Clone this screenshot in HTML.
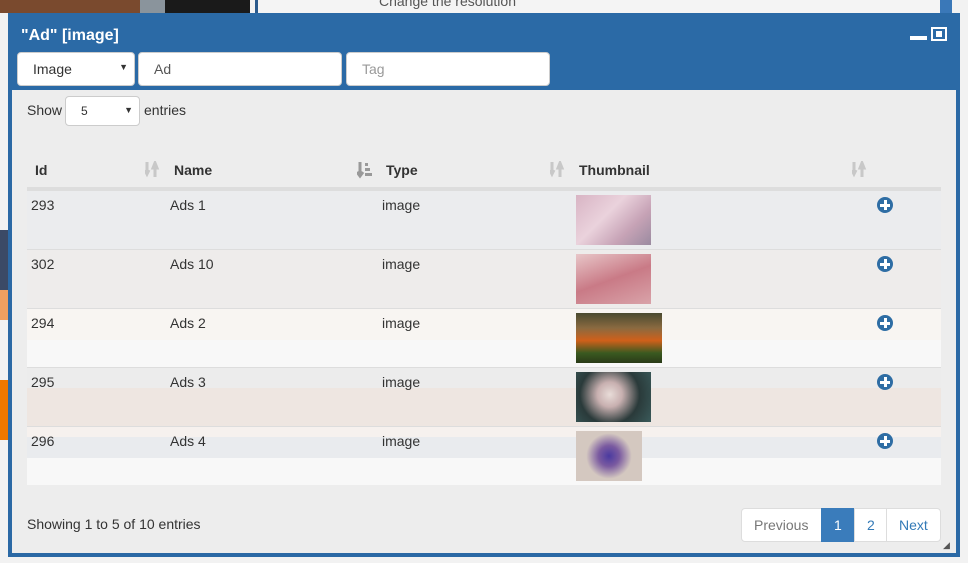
<!DOCTYPE html>
<html><head><meta charset="utf-8"><style>
*{box-sizing:border-box;margin:0;padding:0}
body{width:968px;height:563px;overflow:hidden;background:#f2f2f2;font-family:"Liberation Sans",sans-serif;position:relative;font-size:14px;color:#333}
.abs{position:absolute}
.dlg{left:8px;top:13px;width:952px;height:544px;border:4px solid #2b69a5;border-top:none;background:#ededed}
.hdr{left:8px;top:13px;width:952px;height:77px;background:#2b6aa6}
.inp{position:absolute;top:52px;height:34px;background:#fff;border:1px solid #ccc;border-radius:4px;font-size:14px;padding:8px 15px;color:#555}
.row{position:absolute;left:27px;width:914px;height:59px;border-top:1px solid #ddd}
.row span{position:absolute;top:6px;font-size:14px;color:#333}
.plus{position:absolute;left:850px;top:6px;width:16px;height:16px;border-radius:50%;background:#2e6da4}
.plus:before{content:"";position:absolute;left:3px;top:6.5px;width:10px;height:3px;background:#fff}
.plus:after{content:"";position:absolute;left:6.5px;top:3px;width:3px;height:10px;background:#fff}
.th{position:absolute;top:162px;font-weight:bold;font-size:14px;color:#333}
.sort{position:absolute;top:161px}
.pg{position:absolute;top:508px;height:34px;border:1px solid #ddd;background:#fff;font-size:14px;padding:8px 12px;color:#337ab7}
</style></head><body>
<div class="abs" style="left:0;top:0;width:140px;height:13px;background:#7a4a2e"></div>
<div class="abs" style="left:140px;top:0;width:25px;height:13px;background:#8a949c"></div>
<div class="abs" style="left:165px;top:0;width:85px;height:13px;background:#1a1a1a"></div>
<div class="abs" style="left:255px;top:0;width:685px;height:13px;background:#f4f4f4;border-left:3px solid #2b5a8c"></div>
<div class="abs" style="left:379px;top:-7px;font-size:14px;color:#555">Change the resolution</div>
<div class="abs" style="left:940px;top:0;width:12px;height:13px;background:#3a78b8"></div>
<div class="abs" style="left:0;top:230px;width:8px;height:60px;background:#3b4a66"></div>
<div class="abs" style="left:0;top:290px;width:8px;height:30px;background:#f0a060"></div>
<div class="abs" style="left:0;top:380px;width:8px;height:60px;background:#f07800"></div>

<div class="abs dlg"></div>
<div class="abs hdr"></div>
<div class="abs" style="left:21px;top:27px;color:#fff;font-weight:bold;font-size:16px">"Ad" [image]</div>
<div class="abs" style="left:910px;top:36px;width:17px;height:4px;background:#fff"></div>
<div class="abs" style="left:931px;top:27px;width:16px;height:14px;border:2px solid #fff;background:#2b6aa6"><div style="position:absolute;left:3px;top:2px;width:6px;height:6px;background:#fff"></div></div>

<div class="inp" style="left:17px;width:118px;color:#333">Image<span style="position:absolute;right:6px;top:9px;font-size:9px">▼</span></div>
<div class="inp" style="left:138px;width:204px;color:#555">Ad</div>
<div class="inp" style="left:346px;width:204px;color:#999">Tag</div>

<div class="abs" style="left:27px;top:102px;font-size:14px">Show</div>
<div class="abs" style="left:65px;top:96px;width:75px;height:30px;background:#fff;border:1px solid #ccc;border-radius:4px;font-size:12px;padding:7px 15px">5<span style="position:absolute;right:6px;top:8px;font-size:9px">▼</span></div>
<div class="abs" style="left:144px;top:102px;font-size:14px">entries</div>

<svg width="0" height="0" style="position:absolute"><defs>
<g id="ud"><path d="M2 1v11M0 9l2 4 2-4" stroke="currentColor" stroke-width="3" fill="none"/><path d="M10 16V5M8 7l2-5 2 5z" stroke="currentColor" stroke-width="3" fill="currentColor"/></g>
</defs></svg>
<div class="th" style="left:35px">Id</div><svg class="sort" style="left:145px;color:#c8c8c8" width="16" height="18"><use href="#ud"/></svg>
<div class="th" style="left:174px">Name</div><svg class="sort" style="left:357px;color:#999" width="16" height="18"><path d="M3 1v13M0 11l3 4 3-4" stroke="#999" stroke-width="3" fill="none"/><rect x="8" y="2" width="3" height="3" fill="#999"/><rect x="8" y="7" width="5" height="3" fill="#999"/><rect x="8" y="12" width="7" height="3" fill="#999"/></svg>
<div class="th" style="left:386px">Type</div><svg class="sort" style="left:550px;color:#c8c8c8" width="16" height="18"><use href="#ud"/></svg>
<div class="th" style="left:579px">Thumbnail</div><svg class="sort" style="left:852px;color:#c8c8c8" width="16" height="18"><use href="#ud"/></svg>
<div class="abs" style="left:27px;top:187px;width:914px;height:3px;background:#ddd"></div>

<div class="row" style="top:190px;background:#ebecee"><span style="left:4px">293</span><span style="left:143px">Ads 1</span><span style="left:355px">image</span>
<div class="abs" style="left:549px;top:4px;width:75px;height:50px;background:linear-gradient(135deg,#d8b4c4,#ead2dc 40%,#c7a3b6 70%,#9a8aa0)"></div><div class="plus"></div></div>
<div class="row" style="top:249px;background:#eeeceb"><span style="left:4px">302</span><span style="left:143px">Ads 10</span><span style="left:355px">image</span>
<div class="abs" style="left:549px;top:4px;width:75px;height:50px;background:linear-gradient(160deg,#e8c6c8,#c97a86 50%,#d9a3a9)"></div><div class="plus"></div></div>
<div class="row" style="top:308px;background:linear-gradient(#f8f5f2 0,#f8f5f2 31px,#f8f8f8 31px)"><span style="left:4px">294</span><span style="left:143px">Ads 2</span><span style="left:355px">image</span>
<div class="abs" style="left:549px;top:4px;width:86px;height:50px;background:linear-gradient(#4a4a30,#8a6a40 30%,#d0601a 55%,#3a5a20 80%,#2a3a18)"></div><div class="plus"></div></div>
<div class="row" style="top:367px;background:linear-gradient(#ececec 0,#ececec 20px,#eee6e1 20px)"><span style="left:4px">295</span><span style="left:143px">Ads 3</span><span style="left:355px">image</span>
<div class="abs" style="left:549px;top:4px;width:75px;height:50px;background:radial-gradient(circle at 45% 45%,#e8dcd8 0,#c8b0b0 25%,#2a3a3a 60%,#3a5a5a)"></div><div class="plus"></div></div>
<div class="row" style="top:426px;background:linear-gradient(#f6f1ee 0,#f6f1ee 10px,#e9ebee 10px,#e9ebee 31px,#f8f8f8 31px)"><span style="left:4px">296</span><span style="left:143px">Ads 4</span><span style="left:355px">image</span>
<div class="abs" style="left:549px;top:4px;width:66px;height:50px;background:radial-gradient(circle at 50% 50%,#4a3aa0 0,#7a5aa0 25%,#d4c8c0 55%)"></div><div class="plus"></div></div>

<div class="abs" style="left:27px;top:516px;font-size:14px">Showing 1 to 5 of 10 entries</div>
<div class="pg" style="left:741px;width:81px;color:#777;border-radius:4px 0 0 4px">Previous</div>
<div class="pg" style="left:821px;width:33px;background:#3a7cbb;border-color:#3a7cbb;color:#fff">1</div>
<div class="pg" style="left:854px;width:33px">2</div>
<div class="pg" style="left:886px;width:55px;border-radius:0 4px 4px 0">Next</div>
<div class="abs" style="left:943px;top:540px;font-size:9px;color:#555">◢</div>
</body></html>
